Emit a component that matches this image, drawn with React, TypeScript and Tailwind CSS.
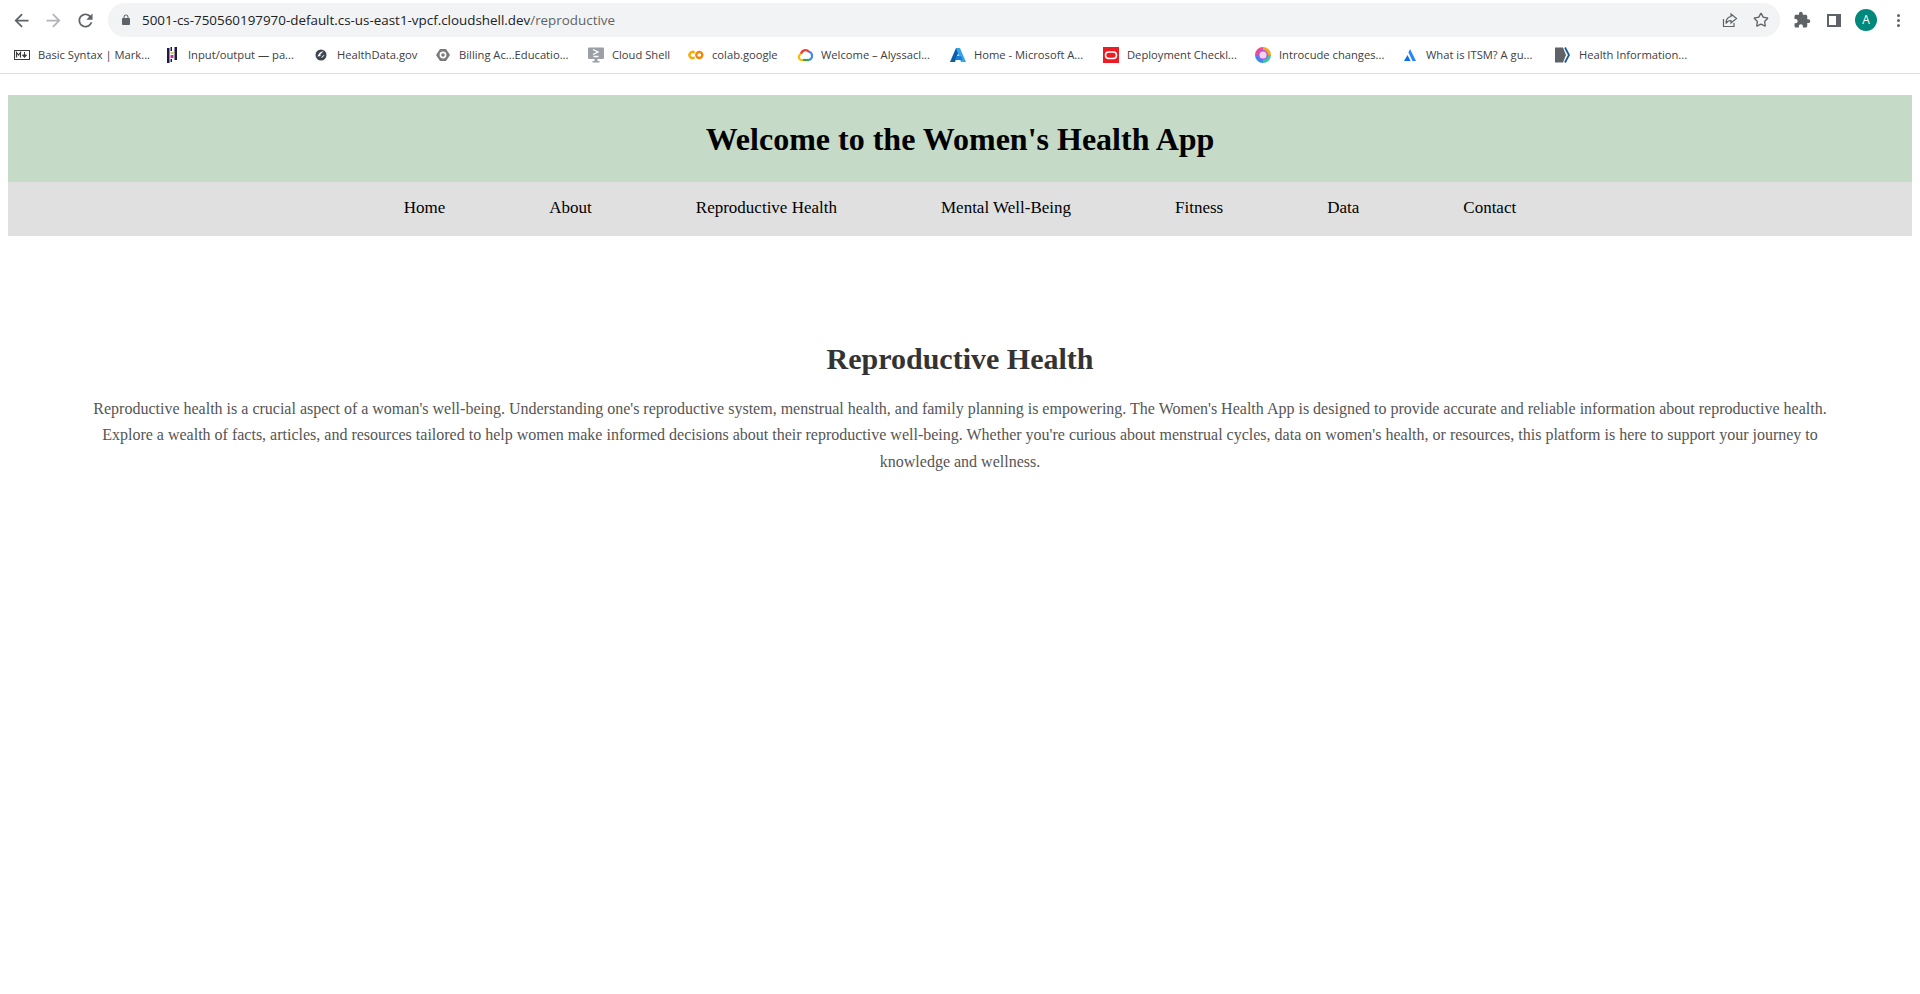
import React from 'react';
import { Star } from 'lucide-react';

const bookmarks = [
  { label: 'Basic Syntax | Mark...', icon: 'md', width: 'w-[150px]' },
  { label: 'Input/output — pa...', icon: 'io', width: 'w-[149px]' },
  { label: 'HealthData.gov', icon: 'hd', width: 'w-[122px]' },
  { label: 'Billing Ac...Educatio...', icon: 'gear', width: 'w-[153px]' },
  { label: 'Cloud Shell', icon: 'cloud', width: 'w-[100px]' },
  { label: 'colab.google', icon: 'colab', width: 'w-[109px]' },
  { label: 'Welcome – Alyssacl...', icon: 'gcp', width: 'w-[153px]' },
  { label: 'Home - Microsoft A...', icon: 'azure', width: 'w-[153px]' },
  { label: 'Deployment Checkl...', icon: 'oracle', width: 'w-[152px]' },
  { label: 'Introcude changes...', icon: 'wheel', width: 'w-[147px]' },
  { label: 'What is ITSM? A gu...', icon: 'atl', width: 'w-[153px]' },
  { label: 'Health Information...', icon: 'hi', width: 'w-[140px]' },
];

const BookmarkIcon = ({ kind }: { kind: string }) => {
  switch (kind) {
    case 'md':
      return (
        <svg width="16" height="16" viewBox="0 0 16 16">
          <rect x="0.5" y="3.5" width="15" height="9" fill="none" stroke="#3c3c3c" />
          <path d="M2.5 10.5V5.5L4.5 8L6.5 5.5V10.5" fill="none" stroke="#3c3c3c" strokeWidth="1.2" />
          <path d="M10.5 5V8M8.5 8H12.5L10.5 10.5Z" fill="#3c3c3c" stroke="#3c3c3c" strokeWidth="1" />
        </svg>
      );
    case 'io':
      return (
        <svg width="16" height="16" viewBox="0 0 16 16">
          <rect x="3" y="1" width="2.5" height="15" fill="#1d1a4a" />
          <rect x="6.5" y="0" width="1.5" height="4" fill="#1d1a4a" />
          <rect x="6.5" y="5" width="3" height="2" fill="#e0c23c" />
          <rect x="6.5" y="8" width="3" height="3" fill="#d6288f" />
          <rect x="6.5" y="12" width="1.5" height="3" fill="#1d1a4a" />
          <rect x="10.5" y="0" width="2.5" height="13" fill="#1d1a4a" />
        </svg>
      );
    case 'hd':
      return (
        <svg width="16" height="16" viewBox="0 0 16 16">
          <circle cx="8" cy="8" r="5.5" fill="#3d4650" />
          <path d="M4.5 9.5C5.5 6.5 7.5 4.5 10.5 4L7 8L8 9Z" fill="#fff" />
          <path d="M8 11C9.5 10.5 11 9.5 11.5 7.5L9.5 9Z" fill="#fff" />
        </svg>
      );
    case 'gear':
      return (
        <svg width="16" height="16" viewBox="0 0 16 16">
          <path d="M5 2H11L15 8L11 14H5L1 8Z" fill="#7b7b7b" />
          <circle cx="8" cy="8" r="3.4" fill="#fff" />
          <circle cx="8" cy="8" r="1.8" fill="#7b7b7b" />
        </svg>
      );
    case 'cloud':
      return (
        <svg width="16" height="16" viewBox="0 0 16 16">
          <rect x="0" y="0.5" width="16" height="11.5" rx="1" fill="#9aa0a6" />
          <path d="M5 2.5L10 5L5 7.5M5.5 9.5H10.5" fill="none" stroke="#fff" strokeWidth="1.3" />
          <path d="M6.5 12H9.5V14H11.5V15.5H4.5V14H6.5Z" fill="#9aa0a6" />
        </svg>
      );
    case 'colab':
      return (
        <svg width="16" height="16" viewBox="0 0 16 16">
          <path d="M6.6 5.8A3 3 0 1 0 6.6 10.2" fill="none" stroke="#f9ab00" strokeWidth="2.4" />
          <circle cx="11.3" cy="8" r="3" fill="none" stroke="#ef8a0c" strokeWidth="2.4" />
        </svg>
      );
    case 'gcp':
      return (
        <svg width="16" height="16" viewBox="0 0 16 16">
          <path d="M4 7A4.5 4.5 0 0 1 12 5" fill="none" stroke="#ea4335" strokeWidth="2.2" />
          <path d="M11.5 4.5A5 4.5 0 0 1 12 13" fill="none" stroke="#4285f4" strokeWidth="2.2" />
          <path d="M12 13H6" fill="none" stroke="#34a853" strokeWidth="2.2" />
          <path d="M6 13A3 3 0 0 1 4 7" fill="none" stroke="#fbbc05" strokeWidth="2.2" />
        </svg>
      );
    case 'azure':
      return (
        <svg width="16" height="16" viewBox="0 0 16 16">
          <path d="M6 1H10L5 15H0Z" fill="#0a5fa8" />
          <path d="M6 1H10L16 15H11Z" fill="#36a4e8" />
          <path d="M6.5 9H11L12.5 13H5Z" fill="#1a7fd1" />
        </svg>
      );
    case 'oracle':
      return (
        <svg width="16" height="16" viewBox="0 0 16 16">
          <rect width="16" height="16" fill="#ed1c24" />
          <rect x="2.5" y="5" width="11" height="6.5" rx="3.2" fill="none" stroke="#fff" strokeWidth="1.5" />
        </svg>
      );
    case 'wheel':
      return (
        <svg width="16" height="16" viewBox="0 0 16 16">
          <circle cx="8" cy="8" r="5" fill="none" stroke="#a45cf0" strokeWidth="4" />
          <path d="M8 1.5A6.5 6.5 0 0 1 14.5 8" fill="none" stroke="#f5a623" strokeWidth="3" />
          <path d="M14.5 8A6.5 6.5 0 0 1 8 14.5" fill="none" stroke="#3cc6a0" strokeWidth="3" />
          <path d="M8 14.5A6.5 6.5 0 0 1 1.5 8" fill="none" stroke="#3a8be8" strokeWidth="3" />
          <path d="M1.5 8A6.5 6.5 0 0 1 8 1.5" fill="none" stroke="#ef4c8c" strokeWidth="3" />
          <circle cx="8" cy="8" r="3.5" fill="#f6d3e6" />
        </svg>
      );
    case 'atl':
      return (
        <svg width="16" height="16" viewBox="0 0 16 16">
          <path d="M8 2L14 14H10.5L6.5 5.5Z" fill="#2684ff" />
          <path d="M5.5 8L8.5 14H2Z" fill="#0f6fe8" />
        </svg>
      );
    case 'hi':
      return (
        <svg width="16" height="16" viewBox="0 0 16 16">
          <path d="M0 0.5H8L11 8L8 15.5H0Z" fill="#5f6368" />
          <path d="M10 0.5L14 8L10 15.5" fill="none" stroke="#1a5a9c" strokeWidth="1.8" />
        </svg>
      );
    default:
      return null;
  }
};

const navLinks = ['Home', 'About', 'Reproductive Health', 'Mental Well-Being', 'Fitness', 'Data', 'Contact'];

export default function App() {
  return (
    <div className="min-h-[994px] bg-white font-['Liberation_Serif',serif]">
      {/* browser chrome */}
      <div className="h-[74px] border-b border-[#dadce0] font-['Open_Sans',sans-serif]">
        <div className="flex h-[40px] items-center pl-[11px]">
          <svg width="21" height="21" viewBox="0 0 24 24" fill="#5f6368" className="mr-[11px]">
            <path d="M20 11H7.83l5.59-5.59L12 4l-8 8 8 8 1.41-1.41L7.83 13H20v-2z" />
          </svg>
          <svg width="21" height="21" viewBox="0 0 24 24" fill="#b1b3b6" className="mr-[11px]">
            <path d="M4 11h12.17l-5.59-5.59L12 4l8 8-8 8-1.41-1.41L16.17 13H4v-2z" />
          </svg>
          <svg width="21" height="21" viewBox="0 0 24 24" fill="#5f6368" className="mr-[12px]">
            <path d="M17.65 6.35C16.2 4.9 14.21 4 12 4c-4.42 0-7.99 3.58-7.99 8s3.57 8 7.99 8c3.73 0 6.84-2.55 7.73-6h-2.08c-.82 2.33-3.04 4-5.65 4-3.31 0-6-2.69-6-6s2.69-6 6-6c1.66 0 3.14.69 4.22 1.78L13 11h7V4l-2.35 2.35z" />
          </svg>
          <div className="flex h-[34px] w-[1672px] shrink-0 items-center rounded-full bg-[#f1f3f4] pl-[12px] pr-[11px]">
            <svg width="12" height="12" viewBox="0 0 24 24" fill="#5f6368" className="mr-[10px]">
              <path d="M18 8h-1V6c0-2.76-2.24-5-5-5S7 3.24 7 6v2H6c-1.1 0-2 .9-2 2v10c0 1.1.9 2 2 2h12c1.1 0 2-.9 2-2V10c0-1.1-.9-2-2-2zM9 6c0-1.66 1.34-3 3-3s3 1.34 3 3v2H9V6z" />
            </svg>
            <span className="text-[13.4px] text-[#202124]">
              5001-cs-750560197970-default.cs-us-east1-vpcf.cloudshell.dev<span className="text-[#5f6368]">/reproductive</span>
            </span>
            <div className="ml-auto flex items-center gap-[15px]">
              <svg width="16" height="16" viewBox="0 0 16 16" fill="none" stroke="#5f6368" strokeWidth="1.2">
                <path d="M1.5 7V14.5H12V11M9 2L14.5 6.5L9 11V8.5C6.5 8.5 5 9.5 4 11.5C4 7.5 6 5 9 4.5Z" />
              </svg>
              <Star size={16} strokeWidth={2} className="text-[#5f6368]" />
            </div>
          </div>
          <svg width="18" height="18" viewBox="0 0 24 24" fill="#5f6368" className="ml-[13px] shrink-0">
            <path d="M20.5 11H19V7c0-1.1-.9-2-2-2h-4V3.5C13 2.12 11.88 1 10.5 1S8 2.12 8 3.5V5H4c-1.1 0-1.99.9-1.99 2v3.8H3.5c1.49 0 2.7 1.21 2.7 2.7s-1.21 2.7-2.7 2.7H2V20c0 1.1.9 2 2 2h3.8v-1.5c0-1.49 1.21-2.7 2.7-2.7 1.49 0 2.7 1.21 2.7 2.7V22H17c1.1 0 2-.9 2-2v-4h1.5c1.38 0 2.5-1.12 2.5-2.5S21.88 11 20.5 11z" />
          </svg>
          <div className="ml-[16px] h-[13px] w-[14px] shrink-0 border-2 border-r-[5px] border-[#5f6368]" />
          <div className="ml-[14px] flex h-[22px] w-[22px] shrink-0 items-center justify-center rounded-full bg-[#00897b] text-[12px] text-white">A</div>
          <div className="ml-[20px] flex shrink-0 flex-col gap-[2px]">
            <div className="h-[3px] w-[3px] rounded-full bg-[#5f6368]" />
            <div className="h-[3px] w-[3px] rounded-full bg-[#5f6368]" />
            <div className="h-[3px] w-[3px] rounded-full bg-[#5f6368]" />
          </div>
        </div>
        <div className="flex h-[30px] items-center pl-[14px] text-[11.2px] text-[#3c4043]">
          {bookmarks.map((b) => (
            <div key={b.label} className={`flex shrink-0 items-center gap-[8px] ${b.width}`}>
              <BookmarkIcon kind={b.icon} />
              <span className="whitespace-nowrap">{b.label}</span>
            </div>
          ))}
        </div>
      </div>

      {/* page */}
      <div className="px-[8px] pt-[21px]">
        <header className="flex h-[87px] items-center justify-center bg-[#c5dac7]">
          <h1 className="text-[32px] font-bold text-black">Welcome to the Women's Health App</h1>
        </header>
        <nav className="flex h-[54px] items-center justify-center gap-[104px] bg-[#e0e0e0] pb-[2px] text-[17px] text-black">
          {navLinks.map((l) => (
            <a key={l}>{l}</a>
          ))}
        </nav>
        <main className="px-[85px] pt-[103px] text-center">
          <h2 className="text-[30px] font-bold leading-[40px] text-[#333]">Reproductive Health</h2>
          <p className="mt-[17px] text-[16px] leading-[26.4px] text-[#555]">
            Reproductive health is a crucial aspect of a woman's well-being. Understanding one's reproductive system, menstrual health, and family planning is empowering. The Women's Health App is designed to provide accurate and reliable information about reproductive health. Explore a wealth of facts, articles, and resources tailored to help women make informed decisions about their reproductive well-being. Whether you're curious about menstrual cycles, data on women's health, or resources, this platform is here to support your journey to knowledge and wellness.
          </p>
        </main>
      </div>
    </div>
  );
}
